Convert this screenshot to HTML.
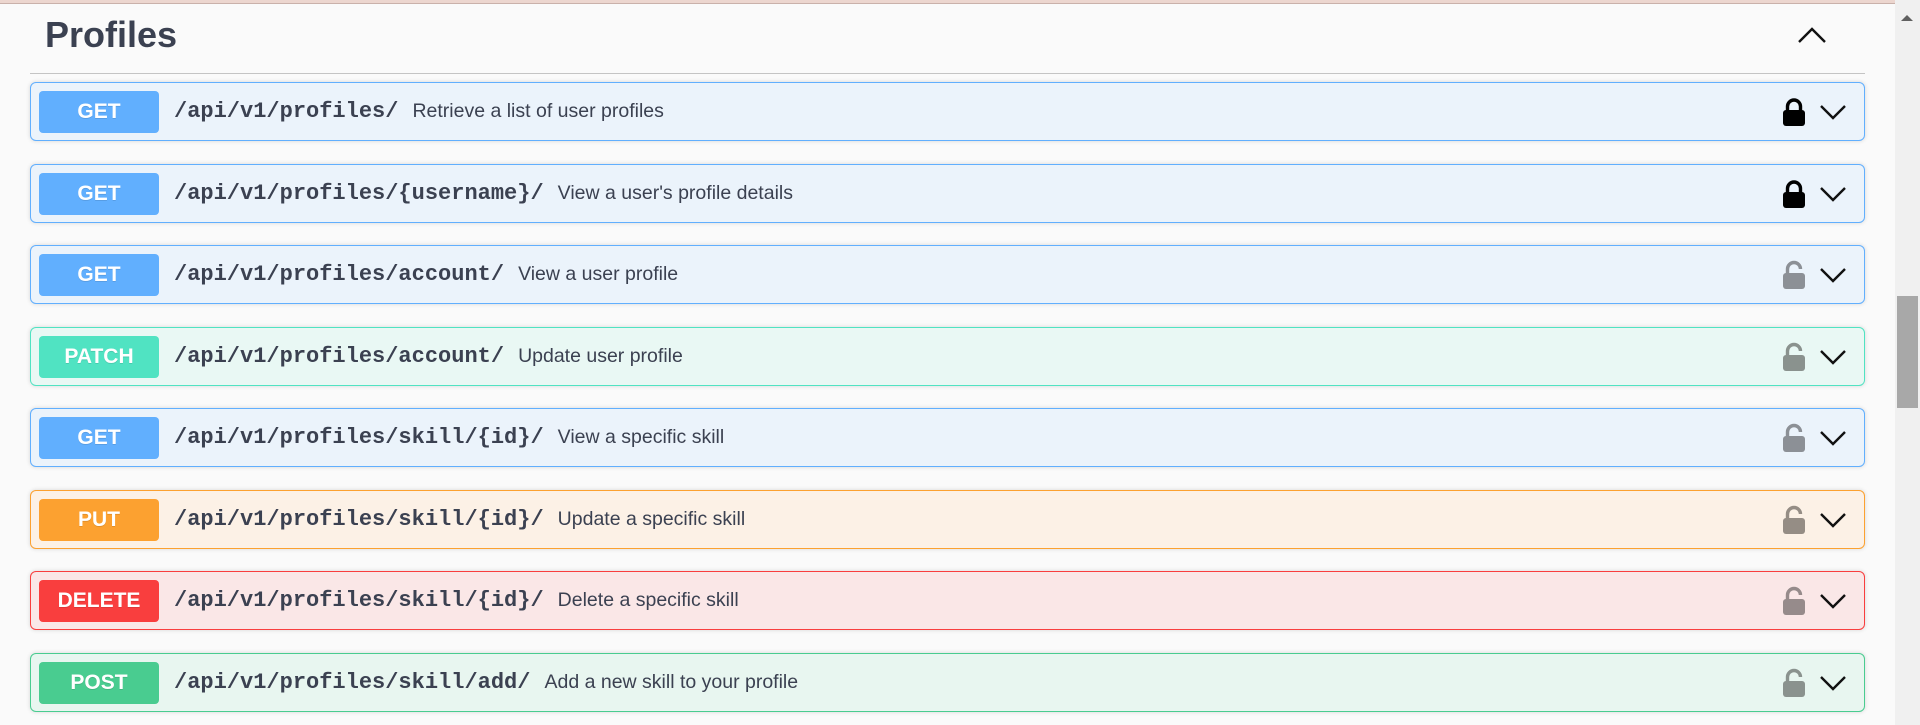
<!DOCTYPE html>
<html><head><meta charset="utf-8"><style>
*{box-sizing:border-box;margin:0;padding:0}
body{width:1920px;height:725px;background:#fafafa;font-family:"Liberation Sans",sans-serif;position:relative;overflow:hidden}
.topbar{position:absolute;left:0;top:0;width:1895px;height:4px;background:#ecd6cf;border-bottom:1px solid #c9b1aa}
.title{position:absolute;left:45px;top:14px;font-size:36px;font-weight:bold;color:#3b4151}
.hr{position:absolute;left:30px;top:73px;width:1835px;height:1px;background:#c4c4c4}
.up{position:absolute;left:1797px;top:26px}
.blk{position:absolute;left:30px;width:1835px;height:59px;border:1px solid;border-radius:6px;box-shadow:0 0 4px rgba(0,0,0,.15)}
.badge{position:absolute;left:8px;top:8px;width:120px;height:42px;border-radius:4px;color:#fff;font-weight:bold;font-size:21px;text-align:center;line-height:42px;text-shadow:0 1px 0 rgba(0,0,0,.1)}
.path{position:absolute;left:143px;top:0;line-height:57px;font-family:"Liberation Mono",monospace;font-weight:bold;font-size:22px;color:#3b4151}
.desc{font-family:"Liberation Sans",sans-serif;font-weight:normal;font-size:19.5px;margin-left:14px;color:#3b4151}
.lock{position:absolute;left:1751px;top:14px}
.chev{position:absolute;left:1788px;top:21px}
.get{background:#ebf3fb;border-color:#61affe}.get .badge{background:#61affe}
.patch{background:#e9f8f4;border-color:#50e3c2}.patch .badge{background:#50e3c2}
.put{background:#fcf1e6;border-color:#fca130}.put .badge{background:#fca130}
.del{background:#fae7e7;border-color:#f93e3e}.del .badge{background:#f93e3e}
.post{background:#e8f6f0;border-color:#49cc90}.post .badge{background:#49cc90}
.sb{position:absolute;left:1895px;top:0;width:25px;height:725px;background:#f0f0f0}
.thumb{position:absolute;left:1897px;top:296px;width:21px;height:112px;background:#a8a8a8}
</style></head><body>
<div class="topbar"></div>
<div class="title">Profiles</div>
<svg class="up" width="30" height="18" viewBox="0 0 30 18"><path d="M2 16 L15 3 L28 16" fill="none" stroke="#111" stroke-width="2.4"/></svg>
<div class="hr"></div>

<div class="blk get" style="top:82px"><div class="badge">GET</div><div class="path">/api/v1/profiles/<span class="desc">Retrieve a list of user profiles</span></div>
<svg class="lock" width="24" height="30" viewBox="0 0 24 30"><path d="M5.5 14 V9.5 a6.5 6.5 0 0 1 13 0 V14" fill="none" stroke="#000" stroke-width="3.4"/><rect x="1" y="13" width="22" height="16" rx="3" fill="#000"/></svg>
<svg class="chev" width="28" height="16" viewBox="0 0 28 16"><path d="M2 2 L14 14 L26 2" fill="none" stroke="#111" stroke-width="2.4"/></svg></div>

<div class="blk get" style="top:164px"><div class="badge">GET</div><div class="path">/api/v1/profiles/{username}/<span class="desc">View a user's profile details</span></div>
<svg class="lock" width="24" height="30" viewBox="0 0 24 30"><path d="M5.5 14 V9.5 a6.5 6.5 0 0 1 13 0 V14" fill="none" stroke="#000" stroke-width="3.4"/><rect x="1" y="13" width="22" height="16" rx="3" fill="#000"/></svg>
<svg class="chev" width="28" height="16" viewBox="0 0 28 16"><path d="M2 2 L14 14 L26 2" fill="none" stroke="#111" stroke-width="2.4"/></svg></div>

<div class="blk get" style="top:245px"><div class="badge">GET</div><div class="path">/api/v1/profiles/account/<span class="desc">View a user profile</span></div>
<svg class="lock" width="24" height="30" viewBox="0 0 24 30"><path d="M5.5 14 V9 a6.5 6.5 0 0 1 13 0" fill="none" stroke="#8c9096" stroke-width="3.4"/><rect x="1" y="13" width="22" height="16" rx="3" fill="#8c9096"/></svg>
<svg class="chev" width="28" height="16" viewBox="0 0 28 16"><path d="M2 2 L14 14 L26 2" fill="none" stroke="#111" stroke-width="2.4"/></svg></div>

<div class="blk patch" style="top:327px"><div class="badge">PATCH</div><div class="path">/api/v1/profiles/account/<span class="desc">Update user profile</span></div>
<svg class="lock" width="24" height="30" viewBox="0 0 24 30"><path d="M5.5 14 V9 a6.5 6.5 0 0 1 13 0" fill="none" stroke="#8a928e" stroke-width="3.4"/><rect x="1" y="13" width="22" height="16" rx="3" fill="#8a928e"/></svg>
<svg class="chev" width="28" height="16" viewBox="0 0 28 16"><path d="M2 2 L14 14 L26 2" fill="none" stroke="#111" stroke-width="2.4"/></svg></div>

<div class="blk get" style="top:408px"><div class="badge">GET</div><div class="path">/api/v1/profiles/skill/{id}/<span class="desc">View a specific skill</span></div>
<svg class="lock" width="24" height="30" viewBox="0 0 24 30"><path d="M5.5 14 V9 a6.5 6.5 0 0 1 13 0" fill="none" stroke="#8c9096" stroke-width="3.4"/><rect x="1" y="13" width="22" height="16" rx="3" fill="#8c9096"/></svg>
<svg class="chev" width="28" height="16" viewBox="0 0 28 16"><path d="M2 2 L14 14 L26 2" fill="none" stroke="#111" stroke-width="2.4"/></svg></div>

<div class="blk put" style="top:490px"><div class="badge">PUT</div><div class="path">/api/v1/profiles/skill/{id}/<span class="desc">Update a specific skill</span></div>
<svg class="lock" width="24" height="30" viewBox="0 0 24 30"><path d="M5.5 14 V9 a6.5 6.5 0 0 1 13 0" fill="none" stroke="#958d85" stroke-width="3.4"/><rect x="1" y="13" width="22" height="16" rx="3" fill="#958d85"/></svg>
<svg class="chev" width="28" height="16" viewBox="0 0 28 16"><path d="M2 2 L14 14 L26 2" fill="none" stroke="#111" stroke-width="2.4"/></svg></div>

<div class="blk del" style="top:571px"><div class="badge">DELETE</div><div class="path">/api/v1/profiles/skill/{id}/<span class="desc">Delete a specific skill</span></div>
<svg class="lock" width="24" height="30" viewBox="0 0 24 30"><path d="M5.5 14 V9 a6.5 6.5 0 0 1 13 0" fill="none" stroke="#968b8b" stroke-width="3.4"/><rect x="1" y="13" width="22" height="16" rx="3" fill="#968b8b"/></svg>
<svg class="chev" width="28" height="16" viewBox="0 0 28 16"><path d="M2 2 L14 14 L26 2" fill="none" stroke="#111" stroke-width="2.4"/></svg></div>

<div class="blk post" style="top:653px"><div class="badge">POST</div><div class="path">/api/v1/profiles/skill/add/<span class="desc">Add a new skill to your profile</span></div>
<svg class="lock" width="24" height="30" viewBox="0 0 24 30"><path d="M5.5 14 V9 a6.5 6.5 0 0 1 13 0" fill="none" stroke="#8a928e" stroke-width="3.4"/><rect x="1" y="13" width="22" height="16" rx="3" fill="#8a928e"/></svg>
<svg class="chev" width="28" height="16" viewBox="0 0 28 16"><path d="M2 2 L14 14 L26 2" fill="none" stroke="#111" stroke-width="2.4"/></svg></div>

<div class="sb"></div>
<svg style="position:absolute;left:1901px;top:14px" width="12" height="8" viewBox="0 0 12 8"><path d="M0 7 L6 1 L12 7Z" fill="#606060"/></svg>
<div class="thumb"></div>
</body></html>
